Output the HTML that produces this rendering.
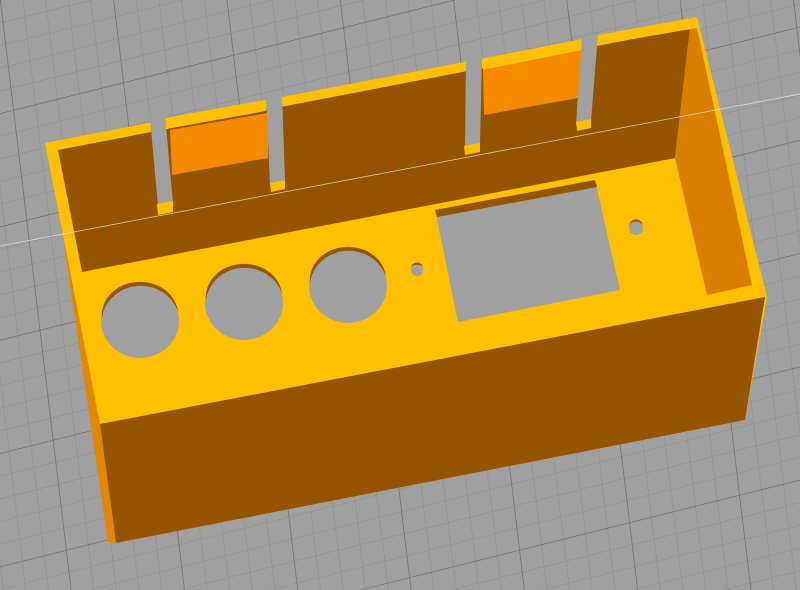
<!DOCTYPE html>
<html><head><meta charset="utf-8"><style>html,body{margin:0;padding:0;background:#9c9c9c}svg{display:block}</style></head>
<body>
<svg width="800" height="590" viewBox="0 0 800 590" xmlns="http://www.w3.org/2000/svg">
<defs>
<pattern id="minor" width="22" height="22" patternUnits="userSpaceOnUse" patternTransform="matrix(1,-0.25,0.12,1,0,0)">
<path d="M0 0H22M0 0V22" stroke="#8a8a8a" stroke-width="1" fill="none"/>
</pattern>
<pattern id="major" width="110" height="110" patternUnits="userSpaceOnUse" patternTransform="matrix(1,-0.25,0.12,1,0,0)">
<path d="M0 0H110M0 0V110" stroke="#6c6c6c" stroke-width="1.3" fill="none"/>
</pattern>
</defs>
<rect width="800" height="590" fill="#a0a0a0"/>
<rect width="800" height="590" fill="url(#minor)"/>
<rect width="800" height="590" fill="url(#major)"/>

<!-- left side strip -->
<polygon points="45,143 100,424 116,543 108,542 50,148" fill="#e08800"/>
<!-- whole yellow silhouette -->
<polygon points="45,143 697,17 767,297 745,420 116,543 100,424" fill="#ffc000"/>
<!-- front face -->
<polygon points="100,424 765,297 745,420 116,543" fill="#955400"/>
<!-- interior brown -->
<polygon points="58,150 690,28 675,158 82,272" fill="#955400"/>
<!-- right inner face -->
<polygon points="690,28 697,28 752,285 707,295 675,158" fill="#d97e00"/>
<!-- orange inner slot faces -->
<polygon points="170,130 268,113 268,158 172,175" fill="#f58a00"/>
<polygon points="483,70 583,50 578,98 484,115" fill="#f58a00"/>
<!-- segment rims -->
<polygon points="165,118 265,100 266,111 166,129" fill="#ffc000"/>
<polygon points="482,62 582,42 583,50 483,70" fill="#ffc000"/>
<polygon points="282,97 466,62 466,71 283,106" fill="#ffc000"/>
<polygon points="598,35 697,17 697,28 598,45" fill="#ffc000"/>
<!-- gaps -->
<polygon points="150,118 165,115 173,203 158,206" fill="#a0a0a0"/>
<polygon points="157,204 173,201 173,212 158,215" fill="#ffc000"/>
<polygon points="266,97 282,94 285,181 270,184" fill="#a0a0a0"/>
<polygon points="270,183 285,180 285,189 271,192" fill="#ffc000"/>
<polygon points="466,60 482,57 480,145 465,148" fill="#a0a0a0"/>
<polygon points="464,146 480,143 480,152 465,155" fill="#ffc000"/>
<polygon points="582,38 598,34 591,121 576,124" fill="#a0a0a0"/>
<polygon points="576,122 591,119 591,128 577,131" fill="#ffc000"/>
<!-- faint white line -->
<line x1="0" y1="246" x2="800" y2="94" stroke="#e8e8e8" stroke-width="0.8" opacity="0.8"/>
<!-- round holes -->
<g>
<ellipse cx="140" cy="321" rx="39" ry="37" fill="#a0a0a0"/>
<path d="M102,318 A39,37 0 0 1 178,312 A38,33 0 0 0 102,318Z" fill="#955400"/>
<ellipse cx="244" cy="303" rx="39" ry="37" fill="#a0a0a0"/>
<path d="M206,300 A39,37 0 0 1 282,294 A38,33 0 0 0 206,300Z" fill="#955400"/>
<ellipse cx="348" cy="286" rx="39" ry="37" fill="#a0a0a0"/>
<path d="M310,283 A39,37 0 0 1 386,277 A38,33 0 0 0 310,283Z" fill="#955400"/>
<circle cx="417" cy="270" r="6" fill="#a0a0a0"/>
<path d="M411,269 A6,6 0 0 1 423,268 A6,4 0 0 0 411,269Z" fill="#955400"/>
<circle cx="636" cy="228" r="7" fill="#a0a0a0"/>
<path d="M629,227 A7,7 0 0 1 643,226 A7,5 0 0 0 629,227Z" fill="#955400"/>
</g>
<!-- rectangular cut -->
<polygon points="435,210 595,180 620,290 458,322" fill="#a0a0a0"/>
<polygon points="435,210 595,180 597,187 437,217" fill="#955400"/>
</svg>
</body></html>
